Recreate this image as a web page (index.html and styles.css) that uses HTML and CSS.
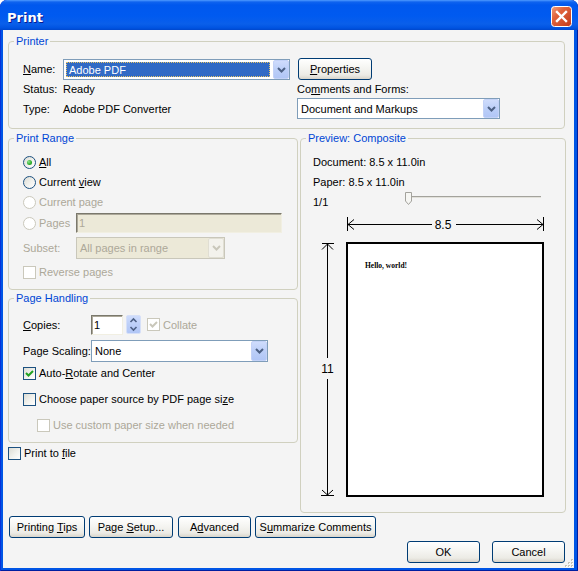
FILE: index.html
```html
<!DOCTYPE html>
<html>
<head>
<meta charset="utf-8">
<title>Print</title>
<link rel="stylesheet" href="styles.css">
</head>
<body>
<div class="window">
  <div class="titlebar">
    <span class="title">Print</span>
    <span class="close">
      <svg width="21" height="21" viewBox="0 0 21 21">
        <defs>
          <linearGradient id="cg" x1="0" y1="0" x2="1" y2="1">
            <stop offset="0" stop-color="#f0a07e"/>
            <stop offset="0.35" stop-color="#e1643d"/>
            <stop offset="1" stop-color="#c0391a"/>
          </linearGradient>
        </defs>
        <rect x="0.5" y="0.5" width="20" height="20" rx="3" fill="url(#cg)" stroke="#ffffff"/>
        <path d="M6 6 L15 15 M15 6 L6 15" stroke="#ffffff" stroke-width="2.4" stroke-linecap="square"/>
      </svg>
    </span>
  </div>
  <div class="client">
    <div class="group printer">
      <span class="legend">Printer</span>
      <div class="printer-grid">
        <span class="lbl"><u>N</u>ame:</span>
        <div class="select name-select">
          <span class="val hl"><span class="focus">Adobe PDF</span></span>
          <span class="dd"><svg width="9" height="6" viewBox="0 0 9 6"><polyline points="1,1 4.5,4.5 8,1" fill="none" stroke="#4d6185" stroke-width="2"/></svg></span>
        </div>
        <button class="btn props"><u>P</u>roperties</button>
        <span class="lbl">Status:</span>
        <span class="val-text">Ready</span>
        <span class="cf-label">Co<u>m</u>ments and Forms:</span>
        <span class="lbl">Type:</span>
        <span class="val-text">Adobe PDF Converter</span>
        <div class="select cf-select">
          <span class="val">Document and Markups</span>
          <span class="dd"><svg width="9" height="6" viewBox="0 0 9 6"><polyline points="1,1 4.5,4.5 8,1" fill="none" stroke="#4d6185" stroke-width="2"/></svg></span>
        </div>
      </div>
    </div>

    <div class="middle">
      <div class="leftcol">
        <div class="group range">
          <span class="legend">Print Range</span>
          <div class="rr"><span class="radio on"></span><span class="rl"><u>A</u>ll</span></div>
          <div class="rr"><span class="radio"></span><span class="rl">Current <u>v</u>iew</span></div>
          <div class="rr dis"><span class="radio off"></span><span class="rl">Current page</span></div>
          <div class="rr tall dis">
            <span class="lcol"><span class="radio off"></span><span class="rl">Pages</span></span>
            <span class="input dis-input pages-input">1</span>
          </div>
          <div class="rr tall subset dis">
            <span class="lcol">Subset:</span>
            <div class="select dis-select subset-select">
              <span class="val">All pages in range</span>
              <span class="dd"><svg width="9" height="6" viewBox="0 0 9 6"><polyline points="1,1 4.5,4.5 8,1" fill="none" stroke="#c9c7ba" stroke-width="2"/></svg></span>
            </div>
          </div>
          <div class="rr rev dis"><span class="check off"></span><span class="rl">Reverse pages</span></div>
        </div>

        <div class="group handling">
          <span class="legend">Page Handling</span>
          <div class="hr copies">
            <span class="hcol"><u>C</u>opies:</span>
            <span class="input copies-input">1</span>
            <span class="spin">
              <svg width="15" height="19" viewBox="0 0 15 19">
                <polyline points="4.5,7 7.5,4 10.5,7" fill="none" stroke="#4d6185" stroke-width="1.6"/>
                <polyline points="4.5,12 7.5,15 10.5,12" fill="none" stroke="#4d6185" stroke-width="1.6"/>
              </svg>
            </span>
            <span class="check off checked-dis">
              <svg width="11" height="11" viewBox="0 0 11 11"><polyline points="2,5 4.5,7.5 9,3" fill="none" stroke="#c9c7ba" stroke-width="2"/></svg>
            </span>
            <span class="rl dis-text">Collate</span>
          </div>
          <div class="hr scaling">
            <span class="hcol">Page Scaling:</span>
            <div class="select scaling-select">
              <span class="val">None</span>
              <span class="dd"><svg width="9" height="6" viewBox="0 0 9 6"><polyline points="1,1 4.5,4.5 8,1" fill="none" stroke="#4d6185" stroke-width="2"/></svg></span>
            </div>
          </div>
          <div class="hr">
            <span class="check">
              <svg width="11" height="11" viewBox="0 0 11 11"><polyline points="2,5 4.5,7.5 9,3" fill="none" stroke="#21a121" stroke-width="2"/></svg>
            </span>
            <span class="rl">Auto-<u>R</u>otate and Center</span>
          </div>
          <div class="hr gap4">
            <span class="check"></span>
            <span class="rl">Choose paper source by PDF page si<u>z</u>e</span>
          </div>
          <div class="hr gap4 indent">
            <span class="check off"></span>
            <span class="rl dis-text">Use custom paper size when needed</span>
          </div>
        </div>

        <div class="ptf">
          <span class="check"></span>
          <span class="rl">Print to <u>f</u>ile</span>
        </div>
      </div>

      <div class="group preview">
        <span class="legend">Preview: Composite</span>
        <div class="pr">Document: 8.5 x 11.0in</div>
        <div class="pr">Paper: 8.5 x 11.0in</div>
        <div class="pr">
          <span class="pagenum">1/1</span>
          <svg class="slider" width="137" height="14" viewBox="0 0 137 14">
            <line x1="1" y1="4.5" x2="136" y2="4.5" stroke="#a3a29c" stroke-width="1"/>
            <line x1="1" y1="5.5" x2="136" y2="5.5" stroke="#e2e1da" stroke-width="1"/>
            <path d="M0.5 0.5 H6.5 V9 L3.5 12.5 L0.5 9 Z" fill="#f6f6f3" stroke="#a3a29c"/>
          </svg>
        </div>
        <svg class="diagram" width="230" height="288" viewBox="0 0 230 288">
          <g stroke="#000" stroke-width="1" fill="none">
            <line x1="27.5" y1="3" x2="27.5" y2="17"/>
            <line x1="223.5" y1="3" x2="223.5" y2="17"/>
            <line x1="27.5" y1="10.5" x2="112" y2="10.5"/>
            <line x1="136" y1="10.5" x2="223.5" y2="10.5"/>
            <polyline points="34,5.5 28,10.5 34,15.5"/>
            <polyline points="217,5.5 223,10.5 217,15.5"/>
            <line x1="2" y1="29.5" x2="14" y2="29.5"/>
            <line x1="1" y1="281.5" x2="14" y2="281.5"/>
            <line x1="7.5" y1="29.5" x2="7.5" y2="144"/>
            <line x1="7.5" y1="165" x2="7.5" y2="281.5"/>
            <polyline points="2,35.5 7.5,30 13,35.5"/>
            <polyline points="2,276 7.5,281 13,276"/>
          </g>
          <text x="123" y="14.5" text-anchor="middle" class="dimtext">8.5</text>
          <text x="7.5" y="159" text-anchor="middle" class="dimtext">11</text>
          <rect x="27" y="29" width="196" height="253" fill="#fff" stroke="#000" stroke-width="2"/>
          <text x="45" y="54" class="hello">Hello, world!</text>
        </svg>
      </div>
    </div>

    <div class="buttons">
      <button class="btn b-tips">Printing <u>T</u>ips</button>
      <button class="btn b-setup">Page <u>S</u>etup...</button>
      <button class="btn b-adv">A<u>d</u>vanced</button>
      <button class="btn b-sum">S<u>u</u>mmarize Comments</button>
    </div>
    <div class="okrow">
      <button class="btn b-ok">OK</button>
      <button class="btn b-cancel">Cancel</button>
    </div>
    <span class="grip">
      <svg width="10" height="10" viewBox="0 0 10 10">
        <g fill="#c7c4b8">
          <rect x="7" y="1" width="2" height="2"/>
          <rect x="4" y="4" width="2" height="2"/><rect x="7" y="4" width="2" height="2"/>
          <rect x="1" y="7" width="2" height="2"/><rect x="4" y="7" width="2" height="2"/><rect x="7" y="7" width="2" height="2"/>
        </g>
        <g fill="#ffffff">
          <rect x="8" y="2" width="1" height="1"/>
          <rect x="5" y="5" width="1" height="1"/><rect x="8" y="5" width="1" height="1"/>
          <rect x="2" y="8" width="1" height="1"/><rect x="5" y="8" width="1" height="1"/><rect x="8" y="8" width="1" height="1"/>
        </g>
      </svg>
    </span>
  </div>
</div>
</body>
</html>
```

FILE: styles.css
```css
* { box-sizing: border-box; }
html, body { margin: 0; padding: 0; }
body {
  width: 578px;
  height: 571px;
  overflow: hidden;
  background: #ffffff;
  font-family: "Liberation Sans", Arial, sans-serif;
  font-size: 11px;
  color: #000;
}
u { text-decoration: underline; text-underline-offset: 1px; }

.window {
  width: 578px;
  height: 571px;
  display: flex;
  flex-direction: column;
  background: #0055e5;
  border-radius: 7px 7px 0 0;
  box-shadow: inset 1px 0 0 #0831d9, inset -1px 0 0 #001ea0, inset 0 -1px 0 #001ea0;
  overflow: hidden;
}

.titlebar {
  height: 30px;
  flex: 0 0 30px;
  display: flex;
  justify-content: space-between;
  align-items: flex-start;
  padding: 6px 6px 0 7px;
  background: linear-gradient(180deg, #4f9bff 0px, #0f63ef 2px, #0058ee 5px, #005af0 16px, #0a5fea 24px, #0053e1 28px, #0047cc 30px);
  border-radius: 7px 7px 0 0;
}
.title {
  font-family: "DejaVu Sans", Verdana, sans-serif;
  font-weight: bold;
  font-size: 13px;
  line-height: 15px;
  margin-top: 4px;
  color: #fff;
  text-shadow: 1px 1px 0 #0a1a8c;
}
.close { display: block; width: 21px; height: 21px; }
.close svg { display: block; }

.client {
  position: relative;
  flex: 1;
  margin: 0 4px 3px 3px;
  background: #f4f4f4;
  display: flex;
  flex-direction: column;
}

.group {
  position: relative;
  border: 1px solid #d0d0bf;
  border-radius: 4px;
}
.legend {
  position: absolute;
  top: -7px;
  left: 5px;
  padding: 0 2px;
  line-height: 13px;
  background: #f4f4f4;
  color: #0046d5;
}

/* printer group */
.printer {
  margin: 11px 9px 0 5px;
  height: 88px;
  padding: 16px 0 0 14px;
}
.printer-grid {
  display: grid;
  grid-template-columns: 40px 234px 1fr;
  grid-template-rows: 22px 18px 21px;
  align-items: center;
}
.lbl, .val-text, .cf-label { white-space: nowrap; }
.name-select { align-self: start; margin-top: 1px; }
.props { width: 74px; height: 22px; margin-left: 1px; }
.cf-select { width: 203px; }

/* select */
.select {
  display: flex;
  height: 21px;
  border: 1px solid #7f9db9;
  background: #fff;
}
.select .val {
  flex: 1;
  display: flex;
  align-items: center;
  padding-left: 3px;
  white-space: nowrap;
  overflow: hidden;
}
.select .dd {
  width: 16px;
  flex: 0 0 16px;
  display: flex;
  align-items: center;
  justify-content: center;
  background: linear-gradient(180deg, #cfdcfc 0%, #bccff8 50%, #b1c6f6 100%);
  border: 1px solid #c3d2f7;
  border-radius: 2px;
  margin: 0;
}
.select .dd svg { display: block; }
.name-select { width: 227px; }
.name-select .val.hl {
  padding: 2px 2px 2px 2px;
}
.name-select .focus {
  display: flex;
  align-items: center;
  width: 100%;
  height: 100%;
  background: #316ac5;
  color: #fff;
  padding-left: 2px;
  border: 1px dotted #e5c365;
  margin-right: 1px;
}

/* buttons */
.btn {
  display: block;
  font-family: "Liberation Sans", Arial, sans-serif;
  font-size: 11px;
  line-height: 20px;
  text-align: center;
  color: #000;
  border: 1px solid #003c74;
  border-radius: 3px;
  background: linear-gradient(180deg, #ffffff 0%, #f6f6f3 40%, #ecebe5 80%, #d8d4ca 100%);
  padding: 0;
  height: 22px;
  white-space: nowrap;
}

/* middle */
.middle {
  display: flex;
  margin: 9px 0 0 5px;
}
.leftcol {
  width: 290px;
  display: flex;
  flex-direction: column;
}

/* print range */
.range {
  height: 152px;
  padding: 13px 0 0 14px;
  display: flex;
  flex-direction: column;
}
.rr {
  display: flex;
  align-items: center;
  height: 20px;
}
.rr.tall { height: 22px; }
.rr.subset { margin-top: 3px; }
.rr.rev { height: 26px; }
.dis, .dis-text { color: #aca899; }
.rl { margin-left: 3px; white-space: nowrap; }
.lcol {
  width: 53px;
  flex: 0 0 53px;
  display: flex;
  align-items: center;
}

.radio {
  width: 13px;
  height: 13px;
  flex: 0 0 13px;
  border-radius: 50%;
  border: 1px solid #1c5180;
  background: linear-gradient(135deg, #dcdcd4 0%, #f2f2ee 55%, #ffffff 100%);
  position: relative;
}
.radio.on::after {
  content: "";
  position: absolute;
  left: 3px;
  top: 3px;
  width: 5px;
  height: 5px;
  border-radius: 50%;
  background: radial-gradient(circle at 35% 35%, #8ee68e 0%, #30b030 55%, #178817 100%);
}
.radio.off {
  border-color: #cac8bb;
  background: #ffffff;
}

.check {
  width: 13px;
  height: 13px;
  flex: 0 0 13px;
  border: 1px solid #1c5180;
  background: linear-gradient(135deg, #dcdcd4 0%, #f2f2ee 55%, #ffffff 100%);
  display: flex;
  align-items: center;
  justify-content: center;
}
.check svg { display: block; }
.check.off {
  border-color: #cac8bb;
  background: #ffffff;
}

.input {
  height: 20px;
  display: flex;
  align-items: center;
  padding-left: 2px;
  background: #fff;
  border-style: solid;
  border-width: 1px;
  border-color: #7a786c #f1efe2 #f1efe2 #7a786c;
  box-shadow: inset 1px 1px 0 #aca899;
}
.dis-input {
  background: #ece9d8;
  color: #aca899;
}
.pages-input { width: 206px; }

.dis-select {
  border-color: #c9c7ba;
  background: #ece9d8;
}
.dis-select .dd {
  background: #f3f2ec;
  border-color: #e0ded3;
}
.subset-select { width: 149px; height: 22px; }

/* page handling */
.handling {
  margin-top: 8px;
  height: 145px;
  padding: 15px 0 0 14px;
  display: flex;
  flex-direction: column;
}
.hr {
  display: flex;
  align-items: center;
  height: 22px;
}
.hr.copies { height: 21px; }
.hr.scaling { margin-top: 5px; }
.hr.gap4 { margin-top: 4px; }
.hr.indent { padding-left: 14px; }
.hcol {
  width: 68px;
  flex: 0 0 68px;
  white-space: nowrap;
}
.copies-input { width: 32px; }
.spin {
  width: 15px;
  height: 19px;
  margin-left: 3px;
  margin-right: 6px;
  border: 1px solid #d6e0f8;
  border-radius: 2px;
  background: linear-gradient(180deg, #cfdcfc 0%, #bccff8 50%, #b1c6f6 100%);
}
.spin svg { display: block; margin: -1px; }
.scaling-select { width: 177px; height: 22px; }

.ptf {
  display: flex;
  align-items: center;
  height: 14px;
  margin-top: 3px;
}

/* preview */
.preview {
  margin-left: 2px;
  width: 266px;
  height: 375px;
  padding: 13px 0 0 12px;
  display: flex;
  flex-direction: column;
}
.pr {
  height: 20px;
  display: flex;
  align-items: center;
  white-space: nowrap;
}
.pagenum { width: 92px; flex: 0 0 92px; }
.slider { align-self: flex-start; display: block; }
.diagram {
  display: block;
  margin: 2px 0 0 7px;
}
.dimtext {
  font-family: "Liberation Sans", Arial, sans-serif;
  font-size: 12px;
  fill: #000;
}
.hello {
  font-family: "Liberation Serif", "Times New Roman", serif;
  font-weight: bold;
  font-size: 7.5px;
  fill: #000;
}

/* bottom buttons */
.buttons {
  display: flex;
  margin: 3px 0 0 6px;
  height: 22px;
}
.b-tips { width: 76px; }
.b-setup { width: 84px; margin-left: 4px; }
.b-adv { width: 73px; margin-left: 5px; }
.b-sum { width: 121px; margin-left: 4px; }

.okrow {
  display: flex;
  justify-content: flex-end;
  margin-top: 3px;
  padding-right: 9px;
}
.b-ok { width: 73px; }
.b-cancel { width: 73px; margin-left: 12px; }

.grip {
  position: absolute;
  right: 0;
  bottom: 0;
  width: 10px;
  height: 10px;
}
.grip svg { display: block; }
```
